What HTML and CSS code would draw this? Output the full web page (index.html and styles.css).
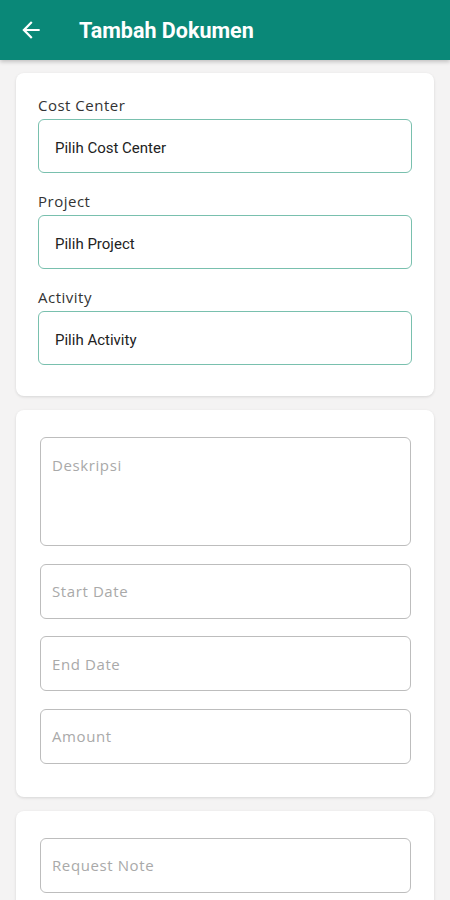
FILE: index.html
```html
<!DOCTYPE html>
<html lang="id">
<head>
  <meta charset="UTF-8" />
  <title>Tambah Dokumen</title>
  <link rel="stylesheet" href="styles.css">
</head>
<body>
  <header class="appbar">
    <svg class="back" viewBox="0 0 24 24" width="26" height="26">
      <path d="M20 11H7.83l5.59-5.59L12 4l-8 8 8 8 1.41-1.41L7.83 13H20v-2z" fill="#fff"/>
    </svg>
    <h1>Tambah Dokumen</h1>
  </header>

  <main class="content">
    <section class="card card-select">
      <div class="field">
        <label>Cost Center</label>
        <div class="select">Pilih Cost Center</div>
      </div>
      <div class="field">
        <label>Project</label>
        <div class="select">Pilih Project</div>
      </div>
      <div class="field">
        <label>Activity</label>
        <div class="select">Pilih Activity</div>
      </div>
    </section>

    <section class="card card-input">
      <div class="input textarea">Deskripsi</div>
      <div class="input">Start Date</div>
      <div class="input">End Date</div>
      <div class="input">Amount</div>
    </section>

    <section class="card card-input">
      <div class="input">Request Note</div>
    </section>
  </main>
</body>
</html>
```

FILE: styles.css
```css
* {
  margin: 0;
  padding: 0;
  box-sizing: border-box;
}

body {
  background: #f4f3f3;
  font-family: 'Open Sans', sans-serif;
  height: 900px;
  overflow: hidden;
}

.appbar {
  height: 60px;
  background: #0a8878;
  display: flex;
  align-items: center;
  padding-left: 18px;
  box-shadow: 0 2px 4px rgba(0, 0, 0, 0.2);
  position: relative;
  z-index: 1;
}

.appbar h1 {
  margin-left: 35px;
  color: #fff;
  font-family: Roboto, sans-serif;
  font-weight: 700;
  font-size: 21.5px;
}

.content {
  padding: 13px 16px 0 16px;
  display: flex;
  flex-direction: column;
  gap: 14px;
}

.card {
  background: #fff;
  border-radius: 8px;
  box-shadow: 0 1px 3px rgba(0, 0, 0, 0.12);
  display: flex;
  flex-direction: column;
}

.card-select {
  padding: 23px 22px 31px 22px;
  gap: 19px;
}

.field label {
  display: block;
  height: 20px;
  margin-bottom: 3px;
  font-size: 15px;
  line-height: 19px;
  letter-spacing: 0.5px;
  color: #333;
}

.select {
  height: 54px;
  border: 1.5px solid #79c0ae;
  border-radius: 6px;
  display: flex;
  align-items: center;
  padding: 3px 0 0 16px;
  font-family: Roboto, sans-serif;
  font-size: 15px;
  color: #222;
}

.card-input {
  padding: 27px 23px 33px 24px;
  gap: 17.5px;
}

.input {
  height: 55px;
  border: 1.5px solid #bdbdbd;
  border-radius: 6px;
  display: flex;
  align-items: center;
  padding-left: 11px;
  font-size: 15px;
  letter-spacing: 0.6px;
  color: #a9a9a9;
}

.input.textarea {
  height: 109px;
  align-items: flex-start;
  padding-top: 17px;
}
```
